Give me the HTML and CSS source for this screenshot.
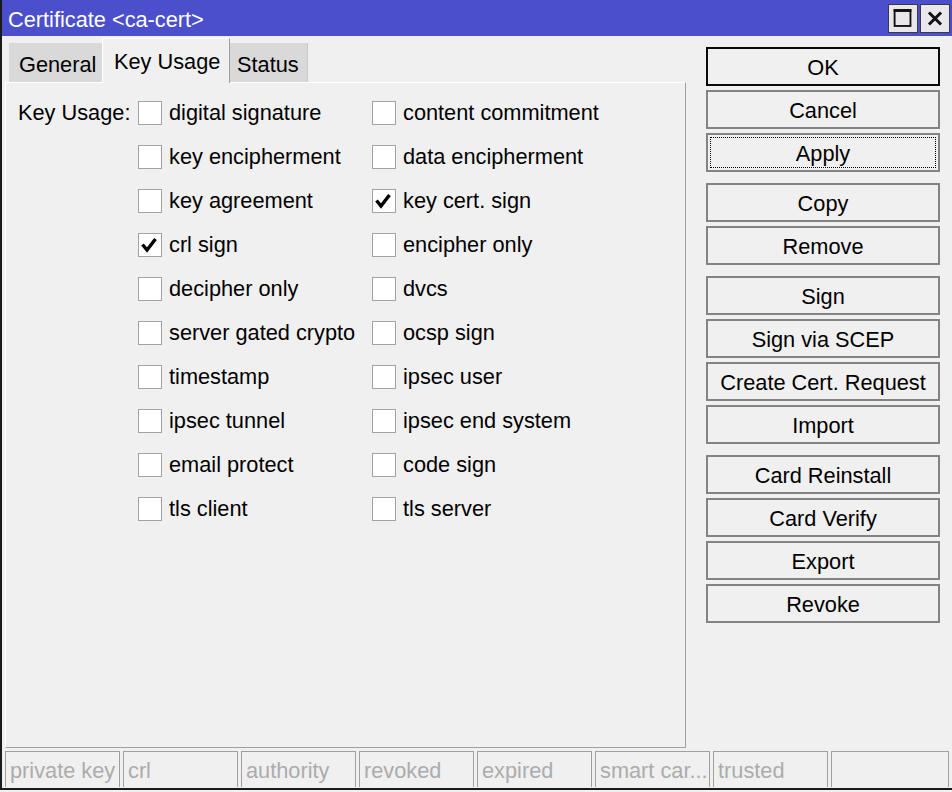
FILE: index.html
```html
<!DOCTYPE html>
<html>
<head>
<meta charset="utf-8">
<link rel="stylesheet" href="styles.css">
</head>
<body>
<div class="window">
  <div class="titlebar">
    <span class="title">Certificate &lt;ca-cert&gt;</span>
    <div class="tbtns">
      <div class="tbtn">
        <svg width="30" height="29" viewBox="0 0 30 29"><rect x="6" y="5.5" width="17" height="17" fill="none" stroke="#111" stroke-width="2"/><rect x="5" y="4.5" width="19" height="3" fill="#111"/></svg>
      </div>
      <div class="tbtn">
        <svg width="30" height="29" viewBox="0 0 30 29"><path d="M8.5 8 L21.5 21 M21.5 8 L8.5 21" stroke="#111" stroke-width="3.2" stroke-linecap="butt"/></svg>
      </div>
    </div>
  </div>
  <div class="main">
    <div class="left">
      <div class="tabs">
        <div class="tab tab-general">General</div>
        <div class="tab tab-active">Key Usage</div>
        <div class="tab tab-status">Status</div>
      </div>
      <div class="panel">
        <div class="grid">
          <div class="lbl">Key Usage:</div>
          <div class="cb"><span class="box"></span>digital signature</div>
          <div class="cb"><span class="box"></span>content commitment</div>

          <div></div>
          <div class="cb"><span class="box"></span>key encipherment</div>
          <div class="cb"><span class="box"></span>data encipherment</div>

          <div></div>
          <div class="cb"><span class="box"></span>key agreement</div>
          <div class="cb"><span class="box"><svg width="22" height="22" viewBox="0 0 22 22"><path d="M3.5 10.5 L8 16 L16.5 5" fill="none" stroke="#000" stroke-width="3.4"/></svg></span>key cert. sign</div>

          <div></div>
          <div class="cb"><span class="box"><svg width="22" height="22" viewBox="0 0 22 22"><path d="M3.5 10.5 L8 16 L16.5 5" fill="none" stroke="#000" stroke-width="3.4"/></svg></span>crl sign</div>
          <div class="cb"><span class="box"></span>encipher only</div>

          <div></div>
          <div class="cb"><span class="box"></span>decipher only</div>
          <div class="cb"><span class="box"></span>dvcs</div>

          <div></div>
          <div class="cb"><span class="box"></span>server gated crypto</div>
          <div class="cb"><span class="box"></span>ocsp sign</div>

          <div></div>
          <div class="cb"><span class="box"></span>timestamp</div>
          <div class="cb"><span class="box"></span>ipsec user</div>

          <div></div>
          <div class="cb"><span class="box"></span>ipsec tunnel</div>
          <div class="cb"><span class="box"></span>ipsec end system</div>

          <div></div>
          <div class="cb"><span class="box"></span>email protect</div>
          <div class="cb"><span class="box"></span>code sign</div>

          <div></div>
          <div class="cb"><span class="box"></span>tls client</div>
          <div class="cb"><span class="box"></span>tls server</div>
        </div>
      </div>
    </div>
    <div class="buttons">
      <div class="group">
        <div class="btn btn-default">OK</div>
        <div class="btn">Cancel</div>
        <div class="btn btn-focus"><span class="focus">Apply</span></div>
      </div>
      <div class="group">
        <div class="btn">Copy</div>
        <div class="btn">Remove</div>
      </div>
      <div class="group">
        <div class="btn">Sign</div>
        <div class="btn">Sign via SCEP</div>
        <div class="btn">Create Cert. Request</div>
        <div class="btn">Import</div>
      </div>
      <div class="group">
        <div class="btn">Card Reinstall</div>
        <div class="btn">Card Verify</div>
        <div class="btn">Export</div>
        <div class="btn">Revoke</div>
      </div>
    </div>
  </div>
  <div class="status">
    <div class="cell">private key</div>
    <div class="cell">crl</div>
    <div class="cell">authority</div>
    <div class="cell">revoked</div>
    <div class="cell">expired</div>
    <div class="cell">smart car...</div>
    <div class="cell">trusted</div>
    <div class="cell"></div>
  </div>
</div>
</body>
</html>
```
FILE: styles.css
```css
html, body {
  margin: 0;
  padding: 0;
  background: #f0f0f0;
}
body {
  font-family: "Liberation Sans", Arial, sans-serif;
  font-size: 21.75px;
  color: #000;
}
.window {
  width: 952px;
  height: 790px;
  box-sizing: border-box;
  border-left: 2px solid #1a1a1a;
  border-bottom: 2px solid #1a1a1a;
  background: #f0f0f0;
  display: flex;
  flex-direction: column;
}
.titlebar {
  height: 36px;
  flex: none;
  background: #4b4fcb;
  display: flex;
  align-items: flex-start;
  justify-content: space-between;
}
.title {
  color: #fff;
  padding-left: 6px;
  padding-top: 4px;
  line-height: 32px;
}
.tbtns {
  display: flex;
  gap: 2px;
  margin-right: 2px;
  margin-top: 4px;
}
.tbtn {
  width: 30px;
  height: 29px;
  box-sizing: border-box;
  background: #e9e7ec;
  border: 1px solid #3a3a3a;
  display: flex;
  align-items: center;
  justify-content: center;
}
.tbtn svg { display: block; }
.main {
  display: flex;
  height: 712px;
  flex: none;
}
.left {
  margin-left: 3px;
  width: 681px;
  display: flex;
  flex-direction: column;
}
.tabs {
  height: 46px;
  flex: none;
  display: flex;
  align-items: flex-end;
  padding-left: 4px;
}
.tab {
  box-sizing: border-box;
  height: 39px;
  background: #d9d9d9;
  padding-top: 4px;
  line-height: 35px;
  white-space: nowrap;
}
.tab-general {
  width: 93px;
  padding-left: 10px;
}
.tab-active {
  width: 128px;
  height: 45px;
  margin-bottom: -1px;
  padding-left: 11px;
  padding-top: 2px;
  background: #f0f0f0;
  border-top: 1px solid #fff;
  border-left: 1px solid #fff;
  border-right: 1px solid #a0a0a0;
  line-height: 41px;
  position: relative;
  z-index: 1;
}
.tab-status {
  width: 78px;
  padding-left: 7px;
  border-right: 1px solid #c8c8c8;
}
.panel {
  flex: 1;
  box-sizing: border-box;
  border-top: 1px solid #fff;
  border-left: 1px solid #fff;
  border-right: 1px solid #a0a0a0;
  border-bottom: 1px solid #a0a0a0;
  padding: 18px 0 0 12px;
}
.grid {
  display: grid;
  grid-template-columns: 120px 234px 1fr;
  grid-auto-rows: 24px;
  row-gap: 20px;
  align-items: center;
}
.lbl {
  white-space: nowrap;
}
.cb {
  display: flex;
  align-items: center;
  gap: 7px;
  white-space: nowrap;
}
.box {
  width: 24px;
  height: 24px;
  box-sizing: border-box;
  border: 1px solid #a3a3a3;
  background: #fff;
  flex: none;
  display: flex;
  align-items: center;
  justify-content: center;
}
.box svg { display: block; }
.buttons {
  margin-left: 20px;
  width: 234px;
  padding-top: 11px;
  display: flex;
  flex-direction: column;
  gap: 11px;
}
.group {
  display: flex;
  flex-direction: column;
  gap: 4px;
}
.btn {
  height: 39px;
  box-sizing: border-box;
  border: 2px solid #838383;
  padding-top: 2px;
  display: flex;
  align-items: center;
  justify-content: center;
  white-space: nowrap;
}
.btn-default {
  border-color: #0a0a0a;
}
.btn-focus {
  padding: 2px;
}
.focus {
  flex: 1;
  align-self: stretch;
  border: 1px dotted #000;
  padding-top: 2px;
  display: flex;
  align-items: center;
  justify-content: center;
}
.status {
  margin: 3px 3px 0 3px;
  height: 36px;
  flex: none;
  display: grid;
  grid-template-columns: repeat(7, 115px) 1fr;
  column-gap: 3px;
}
.cell {
  box-sizing: border-box;
  border-top: 1px solid #a0a0a0;
  border-left: 1px solid #a0a0a0;
  border-right: 1px solid #a0a0a0;
  color: #acacac;
  padding-left: 4px;
  padding-top: 2px;
  line-height: 33px;
  white-space: nowrap;
  overflow: hidden;
}
```
